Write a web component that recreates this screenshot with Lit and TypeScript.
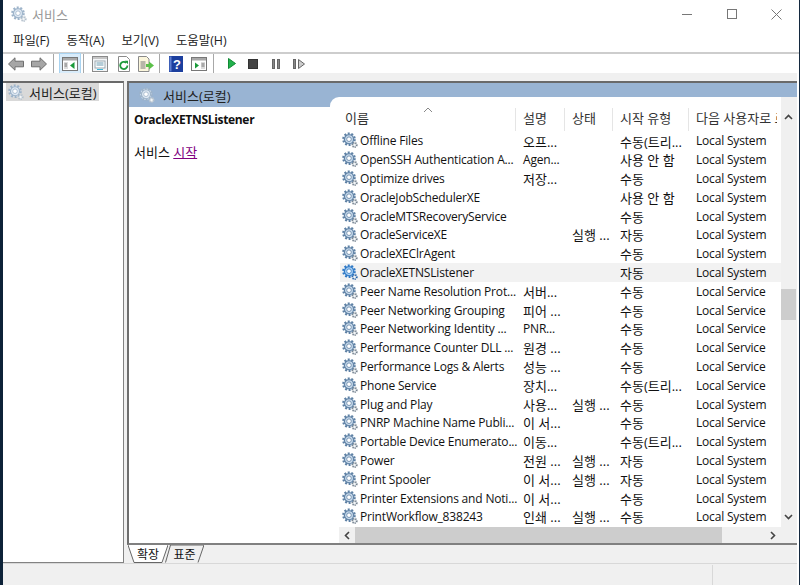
import { LitElement, html, css, svg } from "lit";
import { customElement } from "lit/decorators.js";

const LS = "Local System";
const SV = "Local Service";
const ROWS: string[][] = [
  ["Offline Files", "오프...", "", "수동(트리...", LS],
  ["OpenSSH Authentication A...", "Agen...", "", "사용 안 함", LS],
  ["Optimize drives", "저장...", "", "수동", LS],
  ["OracleJobSchedulerXE", "", "", "사용 안 함", LS],
  ["OracleMTSRecoveryService", "", "", "수동", LS],
  ["OracleServiceXE", "", "실행 ...", "자동", LS],
  ["OracleXEClrAgent", "", "", "수동", LS],
  ["OracleXETNSListener", "", "", "자동", LS],
  ["Peer Name Resolution Prot...", "서버...", "", "수동", SV],
  ["Peer Networking Grouping", "피어 ...", "", "수동", SV],
  ["Peer Networking Identity ...", "PNR...", "", "수동", SV],
  ["Performance Counter DLL ...", "원경 ...", "", "수동", SV],
  ["Performance Logs & Alerts", "성능 ...", "", "수동", SV],
  ["Phone Service", "장치...", "", "수동(트리...", SV],
  ["Plug and Play", "사용...", "실행 ...", "수동", LS],
  ["PNRP Machine Name Publi...", "이 서...", "", "수동", SV],
  ["Portable Device Enumerato...", "이동...", "", "수동(트리...", LS],
  ["Power", "전원 ...", "실행 ...", "자동", LS],
  ["Print Spooler", "이 서...", "실행 ...", "자동", LS],
  ["Printer Extensions and Noti...", "이 서...", "", "수동", LS],
  ["PrintWorkflow_838243", "인쇄 ...", "실행 ...", "수동", LS],
];

const isKo = (s: string) => /[가-힣]/.test(s);

const gear = (kind: "row" | "sel" | "pale") => {
  const c = kind === "sel" ? "#2f78c4" : kind === "pale" ? "#9db3c9" : "#5f81a4";
  const d = kind === "sel" ? "#1c5ea8" : kind === "pale" ? "#b4c0cc" : "#74818e";
  const fill = kind === "sel" ? "#a9cff2" : kind === "pale" ? "#dfe9f3" : "#c9dbec";
  return html`<svg class="gear" width="16" height="17" viewBox="0 0 16 17">
    <circle cx="7" cy="7.2" r="5.6" fill=${fill} stroke=${c} stroke-width="2.4" stroke-dasharray="1.9 1.6"></circle>
    <circle cx="7" cy="7.2" r="4.5" fill=${fill} stroke=${c} stroke-width="1.1"></circle>
    <circle cx="7" cy="7.2" r="2.3" fill="#fff" stroke=${c} stroke-width=".8"></circle>
    <circle cx="12.6" cy="13" r="2.2" fill="#dfe5ea" stroke=${d} stroke-width="1.7" stroke-dasharray="1.1 .9"></circle>
    <circle cx="12.6" cy="13" r=".8" fill="#fff"></circle>
  </svg>`;
};

const win = svg`<rect x=".5" y=".5" width="15" height="13" fill="#fff" stroke="#777"></rect><rect x="1" y="1" width="14" height="2.5" fill="#a8a8a8"></rect>`;
const arrow = (d: string) => html`<svg width="16" height="14" viewBox="0 0 16 14"><path d=${d} fill="#a6a6a6" stroke="#6e6e6e"></path></svg>`;

@customElement("app-root")
export class AppRoot extends LitElement {
  static styles = css`
    :host {
      display: flex;
      width: 800px;
      height: 585px;
      overflow: hidden;
      background: #fff;
      font-family: "Open Sans", "Noto Sans CJK KR", sans-serif;
      font-size: 12px;
      color: #111;
    }
    .ko { font-size: 13px; letter-spacing: 0; }
    .edge { width: 3px; flex: none; background: #0d2238; }
    .edge.r { width: 1px; background: #14293f; }
    .main { flex: 1; min-width: 0; display: flex; flex-direction: column; }
    .title { height: 28px; flex: none; display: flex; align-items: center; padding-left: 8px; gap: 5px; color: #999; }
    .title .name { flex: 1; }
    .winbtns { display: flex; }
    .winbtns div { width: 45px; height: 28px; display: flex; align-items: center; justify-content: center; }
    .menu { height: 24px; flex: none; display: flex; gap: 17px; padding-left: 10px; align-items: center; border-bottom: 2px solid #cdcdcd; box-sizing: content-box; color: #222; font-size: 12.4px; }
    .tools { height: 19px; flex: none; display: flex; align-items: center; padding-left: 5px; background: #fff; }
    .tools svg { flex: none; display: block; }
    .sep { width: 1px; height: 20px; background: #a8a8a8; flex: none; }
    .hl { width: 20px; height: 20px; flex: none; display: flex; align-items: center; justify-content: center; background: #d9ecfa; border: 1px solid #a9d3f0; }
    .m2 { margin-left: 2px; } .m5 { margin-left: 5px; } .m6 { margin-left: 6px; } .m7 { margin-left: 7px; }
    .m8 { margin-left: 8px; } .m9 { margin-left: 9px; } .m12 { margin-left: 12px; } .m13 { margin-left: 13px; } .m14 { margin-left: 14px; }
    .band { height: 8px; flex: none; background: #f0f0f0; margin-right: 2px; }
    .body { height: 482px; flex: none; display: flex; background: #f0f0f0; margin-right: 2px; }
    .tree { width: 121px; flex: none; background: #fff; border-right: 1px solid #828282; border-bottom: 1px solid #828282; border-top: 2px solid #6a6a6a; box-sizing: border-box; }
    .tree-row { display: flex; align-items: center; gap: 5px; margin: 0 24px 0 3px; height: 18px; padding-left: 2px; background: #d9d9d9; color: #222; white-space: nowrap; }
    .gap { width: 3px; flex: none; }
    .right { flex: 1; min-width: 0; display: flex; flex-direction: column; }
    .pane { height: 464px; flex: none; display: flex; flex-direction: column; background: #fff; border-left: 2px solid #6e6e6e; border-top: 2px solid #6a6a6a; border-bottom: 2px solid #808080; box-sizing: border-box; }
    .head { height: 24px; flex: none; background: #99b4d3; display: flex; align-items: center; padding-left: 10px; gap: 8px; color: #222; }
    .content { flex: 1; min-height: 0; display: flex; }
    .desc { width: 201px; flex: none; padding: 5px 0 0 5px; box-sizing: border-box; }
    .desc b { display: block; font-weight: 700; line-height: 16px; letter-spacing: -0.32px; white-space: nowrap; }
    .desc p { margin: 16px 0 0; line-height: 16px; }
    .desc a { color: #800080; text-decoration: underline; }
    .list { flex: 1; min-width: 0; margin-top: -10px; background: #fff; border-top-left-radius: 9px; display: flex; flex-direction: column; overflow: hidden; }
    .listmain { flex: 1; min-height: 0; display: flex; }
    .table { flex: 1; min-width: 0; overflow: hidden; padding-left: 10px; letter-spacing: -0.18px; }
    .tr { display: grid; grid-template-columns: 176px 49px 48px 76px 1fr; height: 18.8px; align-items: center; white-space: nowrap; }
    .tr.sel { background: #f2f2f2; }
    .th { height: 34.6px; align-items: start; position: relative; color: #333; overflow: hidden; }
    .th span { display: block; height: 23px; margin-top: 11px; line-height: 20px; padding-left: 7px; border-right: 1px solid #e5e5e5; white-space: nowrap; overflow: hidden; }
    .th span:first-of-type { padding-left: 5px; }
    .th span:last-of-type { border-right: none; margin-right: 4px; }
    .sort { position: absolute; left: 83px; top: 10px; }
    .cell { padding-left: 7px; overflow: hidden; }
    .namecell { display: flex; align-items: center; gap: 2px; padding-left: 2px; }
    .gear { flex: none; display: block; }
    .vs { width: 16px; flex: none; background: #f0f0f0; display: flex; flex-direction: column; align-items: flex-start; }
    .vs .ar { width: 15px; height: 17px; display: flex; align-items: center; justify-content: center; margin-top: 11px; }
    .vs .thumb { width: 15px; height: 31px; background: #cdcdcd; margin-top: 164px; }
    .vs .sp { flex: 1; }
    .vs .ar.b { margin: 0 0 2px; }
    .hs { height: 16px; flex: none; margin-left: 9px; display: flex; align-items: center; background: #f0f0f0; }
    .hs .ar { width: 16px; display: flex; justify-content: center; }
    .hs .thumb { width: 367px; height: 16px; background: #cdcdcd; }
    .hs .sp { flex: 1; }
    .tabs { height: 18px; flex: none; display: flex; padding-left: 1px; background: #f0f0f0; }
    .tab { position: relative; width: 40px; height: 18px; display: flex; align-items: center; justify-content: center; color: #111; font-size: 12px; }
    .tab svg { position: absolute; left: 0; top: 0; }
    .tab span { position: relative; }
    .tab + .tab { margin-left: -3px; width: 39px; }
    .status { height: 22px; flex: none; background: #f0f0f0; border-top: 1px solid #d8d8d8; box-sizing: border-box; display: flex; justify-content: flex-end; margin-right: 2px; }
    .status div { border-left: 1px solid #d8d8d8; width: 84px; margin-top: 1px; }
  `;

  render() {
    return html`
      <div class="edge"></div>
      <div class="main">
        <div class="title">
          ${gear("pale")}<span class="name ko">서비스</span>
          <div class="winbtns">
            <div><svg width="10" height="10"><path d="M0 5.5h10" stroke="#777"></path></svg></div>
            <div><svg width="10" height="10"><rect x=".5" y=".5" width="9" height="9" fill="none" stroke="#777"></rect></svg></div>
            <div><svg width="11" height="11"><path d="M.5.5l10 10M10.5.5l-10 10" stroke="#777"></path></svg></div>
          </div>
        </div>
        <div class="menu"><span>파일(F)</span><span>동작(A)</span><span>보기(V)</span><span>도움말(H)</span></div>
        <div class="tools">
          ${arrow("M.5 7L7 .8v3.4h8.5v5.6H7v3.4z")}
          <span class="m7">${arrow("M15.5 7L9 .8v3.4H.5v5.6H9v3.4z")}</span>
          <div class="sep m6"></div>
          <div class="hl m5"><svg width="16" height="14" viewBox="0 0 16 14">${win}<rect x="2" y="5" width="4" height="7" fill="#dcdcdc"></rect><path d="M2.5 7h2.5M2.5 9h2.5" stroke="#777"></path><path d="M12.5 5v7L8 8.5z" fill="#1a9a3a"></path></svg></div>
          <div class="sep m2"></div>
          <svg class="m8" width="16" height="16" viewBox="0 0 16 16"><rect x=".5" y=".5" width="15" height="15" fill="#f4f6f8" stroke="#8a8a8a"></rect><rect x="1" y="1" width="14" height="2" fill="#c6c6c6"></rect><rect x="3" y="5" width="10" height="7" fill="#fff" stroke="#9aa8b0"></rect><path d="M4.5 7h7M4.5 9h7" stroke="#6a9ab0"></path><path d="M5 13.5h6" stroke="#3fb6d8"></path></svg>
          <svg class="m9" width="15" height="16" viewBox="0 0 15 16"><path d="M1.5.5h8l3 3v12h-11z" fill="#fff" stroke="#8a8a8a"></path><path d="M10.4 9.5a3.6 3.6 0 1 1-1.2-2.7" fill="none" stroke="#1e9a3a" stroke-width="1.8"></path><path d="M7.6 4.8h3.4v3.4z" fill="#1e9a3a"></path></svg>
          <svg class="m6" width="16" height="16" viewBox="0 0 16 16"><path d="M.5.5h8l2.5 2.5v12.5H.5z" fill="#fbf6dc" stroke="#8a8a8a"></path><path d="M2.5 6h5M2.5 8h5M2.5 10h5M2.5 12h5" stroke="#777"></path><path d="M8 8h3V5.5l5 4-5 4V11H8z" fill="#5cc04a"></path></svg>
          <div class="sep m5"></div>
          <svg class="m9" width="14" height="16" viewBox="0 0 14 16"><rect width="14" height="16" fill="#1c3f9e"></rect><rect x=".5" y=".5" width="2" height="15" fill="#5e7fd0"></rect><text x="8" y="13" font-size="13" font-weight="700" text-anchor="middle" fill="#fff" font-family="Liberation Sans">?</text></svg>
          <svg class="m8" width="16" height="14" viewBox="0 0 16 14">${win}<rect x="10" y="5" width="4" height="7" fill="#dcdcdc"></rect><path d="M10.5 7h3M10.5 9h3" stroke="#777"></path><path d="M4 5.5v6L8 8.5z" fill="#1a9a3a"></path></svg>
          <div class="sep m6"></div>
          <svg class="m14" width="8" height="11" viewBox="0 0 8 11"><path d="M.5.5L7.5 5.5.5 10.5z" fill="#22b14c" stroke="#118a35"></path></svg>
          <svg class="m12" width="10" height="10" viewBox="0 0 10 10"><rect x=".5" y=".5" width="9" height="9" fill="#444" stroke="#333"></rect></svg>
          <svg class="m14" width="8" height="10" viewBox="0 0 8 10"><rect x=".5" y=".5" width="2" height="9" fill="#888" stroke="#666"></rect><rect x="5.5" y=".5" width="2" height="9" fill="#888" stroke="#666"></rect></svg>
          <svg class="m13" width="12" height="10" viewBox="0 0 12 10"><rect x=".5" y=".5" width="2" height="9" fill="#888" stroke="#666"></rect><path d="M5.5.5l6 4.5-6 4.5z" fill="#ccc" stroke="#666"></path></svg>
        </div>
        <div class="band"></div>
        <div class="body">
          <div class="tree"><div class="tree-row">${gear("pale")}<span class="ko">서비스(로컬)</span></div></div>
          <div class="gap"></div>
          <div class="right">
            <div class="pane">
              <div class="head">${gear("pale")}<span class="ko">서비스(로컬)</span></div>
              <div class="content">
                <div class="desc">
                  <b>OracleXETNSListener</b>
                  <p class="ko">서비스 <a>시작</a></p>
                </div>
                <div class="list">
                  <div class="listmain">
                    <div class="table">
                      <div class="tr th ko">
                        <span>이름</span><span>설명</span><span>상태</span><span>시작 유형</span><span>다음 사용자로 로그온</span>
                        <svg class="sort" width="10" height="6" viewBox="0 0 10 6"><path d="M1 5l4-4 4 4" fill="none" stroke="#888"></path></svg>
                      </div>
                      ${ROWS.map((r, i) => html`
                        <div class="tr ${i === 7 ? "sel" : ""}">
                          <div class="namecell">${gear(i === 7 ? "sel" : "row")}<span>${r[0]}</span></div>
                          ${r.slice(1).map((v) => html`<div class="cell ${isKo(v) ? "ko" : ""}">${v}</div>`)}
                        </div>`)}
                    </div>
                    <div class="vs">
                      <div class="ar"><svg width="9" height="6"><path d="M1 5l3.5-3.5L8 5" fill="none" stroke="#444" stroke-width="1.6"></path></svg></div>
                      <div class="thumb"></div>
                      <div class="sp"></div>
                      <div class="ar b"><svg width="9" height="6"><path d="M1 1l3.5 3.5L8 1" fill="none" stroke="#444" stroke-width="1.6"></path></svg></div>
                    </div>
                  </div>
                  <div class="hs">
                    <div class="ar"><svg width="6" height="9"><path d="M5 1L1.5 4.5 5 8" fill="none" stroke="#444" stroke-width="1.6"></path></svg></div>
                    <div class="thumb"></div>
                    <div class="sp"></div>
                    <div class="ar"><svg width="6" height="9"><path d="M1 1l3.5 3.5L1 8" fill="none" stroke="#444" stroke-width="1.6"></path></svg></div>
                    <div class="ar"></div>
                  </div>
                </div>
              </div>
            </div>
            <div class="tabs">
              <div class="tab"><svg width="40" height="18" viewBox="0 0 40 18"><path d="M0 0l6 17.5h28L40 0" fill="#fff" stroke="#666"></path></svg><span>확장</span></div>
              <div class="tab"><svg width="39" height="18" viewBox="0 0 39 18"><path d="M.5 17.5L5.5 0H39l-6 17.5" fill="#f0f0f0" stroke="#666"></path></svg><span>표준</span></div>
            </div>
          </div>
        </div>
        <div class="status"><div></div></div>
      </div>
      <div class="edge r"></div>
    `;
  }
}
